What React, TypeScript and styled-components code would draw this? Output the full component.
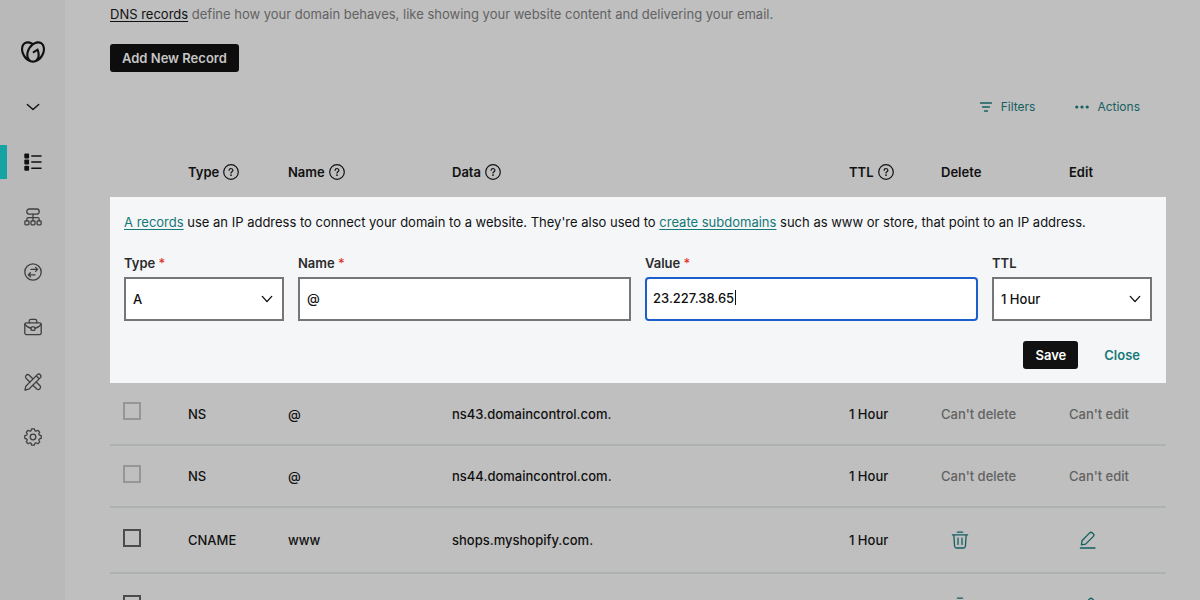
import React from "react";
import styled, { createGlobalStyle, css } from "styled-components";
import { SiGodaddy } from "react-icons/si";

const color = {
  page: "#bfbfbf",
  sidebar: "#b9b9b9",
  ink: "#111111",
  icon: "#3f3f3f",
  muted: "#626262",
  rule: "#aeb1b1",
  tealDim: "#145f60",
  teal: "#167877",
  accent: "#16a3a4",
  panel: "#f4f6f8",
  field: "#767676",
  focus: "#1b5fcd",
  required: "#e0352b",
};

const GlobalStyle = createGlobalStyle`
  *, *::before, *::after { box-sizing: border-box; }
  body {
    margin: 0;
    background: ${color.page};
    color: ${color.ink};
    font: 500 13px/20px Inter, "Liberation Sans", sans-serif;
  }
  button, input, select { font: inherit; color: inherit; }
`;

const Page = styled.div`
  display: flex;
  height: 100vh;
  overflow: hidden;
`;

const Sidebar = styled.nav`
  flex: none;
  width: 65px;
  padding-top: 24px;
  display: flex;
  flex-direction: column;
  background: ${color.sidebar};
`;

const NavButton = styled.button<{ $active?: boolean }>`
  height: 55px;
  flex: none;
  padding: 0;
  border: 0;
  background: none;
  display: grid;
  grid-template-columns: 7px 1fr 7px;
  align-items: center;
  justify-items: center;
  color: ${(p) => (p.$active ? color.ink : color.icon)};
`;

const Marker = styled.span<{ $active?: boolean }>`
  width: 7px;
  height: 34px;
  background: ${(p) => (p.$active ? color.accent : "transparent")};
`;

const Main = styled.main`
  flex: 1;
  min-width: 0;
  padding: 4px 34px 0 45px;
`;

const Intro = styled.p`
  margin: 0 0 20px;
  color: ${color.muted};
  font-weight: 400;
`;

const TextLink = styled.a<{ $teal?: boolean }>`
  color: ${(p) => (p.$teal ? color.teal : color.ink)};
  text-decoration: underline;
  text-underline-offset: 2px;
`;

const SolidButton = styled.button<{ $dim?: boolean }>`
  height: 28px;
  padding: 0 12px;
  border: 0;
  border-radius: 3px;
  background: ${(p) => (p.$dim ? "#0d0d0d" : "#111111")};
  color: ${(p) => (p.$dim ? "#c6c6c6" : "#ffffff")};
  font-weight: 600;
`;

const PlainButton = styled.button`
  height: 28px;
  padding: 0 12px;
  border: 0;
  background: none;
  color: ${color.teal};
  font-weight: 600;
`;

const Toolbar = styled.div`
  display: flex;
  justify-content: flex-end;
  gap: 40px;
  padding: 25px 26px 30px 0;
`;

const ToolButton = styled.button`
  display: flex;
  align-items: center;
  gap: 8px;
  height: 20px;
  padding: 0;
  border: 0;
  background: none;
  color: ${color.tealDim};
  font-size: 12px;
  font-weight: 400;
`;

const Table = styled.table`
  width: 100%;
  table-layout: fixed;
  border-collapse: collapse;
`;

const HeadCell = styled.th`
  height: 50px;
  padding: 0;
  text-align: left;
  font-weight: 600;
`;

const HeadLabel = styled.span`
  display: flex;
  align-items: center;
  gap: 4px;
`;

const Row = styled.tr`
  border-bottom: 2px solid ${color.rule};
`;

const Cell = styled.td<{ $tall?: boolean; $muted?: boolean }>`
  height: ${(p) => (p.$tall ? 66 : 62)}px;
  padding: 0;
  color: ${(p) => (p.$muted ? color.muted : color.ink)};
`;

const CheckCell = styled(Cell)`
  padding: 0 0 5px 13px;
`;

const Check = styled.input`
  appearance: none;
  display: block;
  width: 18px;
  height: 18px;
  margin: 0;
  border: 2px solid #4c4c4c;
  &:disabled {
    border-color: #969696;
  }
`;

const IconButton = styled.button`
  display: block;
  padding: 0 10px;
  border: 0;
  background: none;
  color: ${color.tealDim};
  svg {
    display: block;
  }
`;

const PanelCell = styled.td`
  padding: 0;
`;

const Panel = styled.form`
  padding: 15px 14px 14px;
  background: ${color.panel};
`;

const PanelText = styled.p`
  margin: 0 0 21px;
  font-weight: 400;
`;

const Fields = styled.div`
  display: grid;
  grid-template-columns: 160px 1fr 1fr 160px;
  gap: 14px;
`;

const Field = styled.div`
  display: flex;
  flex-direction: column;
  gap: 4px;
  min-width: 0;
`;

const Label = styled.label`
  font-weight: 600;
  color: #2b2b2b;
`;

const Star = styled.span`
  color: ${color.required};
  font-weight: 500;
`;

const FieldBox = styled.div`
  position: relative;
  height: 44px;
`;

const control = css`
  appearance: none;
  width: 100%;
  height: 44px;
  padding: 0 7px;
  border: 2px solid ${color.field};
  border-radius: 0;
  background: #ffffff;
  outline: none;
`;

const Select = styled.select`
  ${control}
`;

const Input = styled.input<{ $focused?: boolean }>`
  ${control}
  padding-bottom: 3px;
  ${(p) =>
    p.$focused &&
    css`
      border-color: ${color.focus};
      border-radius: 4px;
      padding-left: 6px;
    `}
`;

const SelectArrow = styled.span`
  position: absolute;
  top: 0;
  right: 11px;
  height: 44px;
  display: flex;
  align-items: center;
  pointer-events: none;
`;

const Caret = styled.span`
  position: absolute;
  top: 13px;
  left: 90px;
  width: 1px;
  height: 15px;
  background: ${color.ink};
`;

const Buttons = styled.div`
  display: flex;
  justify-content: flex-end;
  gap: 14px;
  padding-top: 20px;
`;

const Stroke = ({ w = 18, h = 18, sw = 1.3, children }: { w?: number; h?: number; sw?: number; children: React.ReactNode }) => (
  <svg width={w} height={h} viewBox={`0 0 ${w} ${h}`} fill="none" stroke="currentColor" strokeWidth={sw} strokeLinecap="round" strokeLinejoin="round" aria-hidden="true">
    {children}
  </svg>
);

const Chevron = ({ w = 12 }: { w?: number }) => (
  <Stroke w={w} h={8} sw={1.4}>
    <path d={`M1.3 1.4 L${w / 2} 6.6 L${w - 1.3} 1.4`} />
  </Stroke>
);

const ListIcon = () => (
  <Stroke sw={1.5}>
    <g fill="currentColor" stroke="none">
      <rect x="0.3" y="0.5" width="4.8" height="5" rx="1" />
      <rect x="0.3" y="6.6" width="4.8" height="5" rx="1" />
      <rect x="0.3" y="12.7" width="4.8" height="5" rx="1" />
    </g>
    <path d="M7.8 3H17M7.8 9.1H17M7.8 15.2H17" />
  </Stroke>
);

const SitemapIcon = () => (
  <Stroke>
    <rect x="2.8" y="1" width="12.4" height="5.2" rx="2.4" />
    <path d="M9 6.2V12.8M2.8 12.8V11.2Q2.8 9.6 4.4 9.6H13.6Q15.2 9.6 15.2 11.2V12.8" />
    <rect x="0.9" y="12.8" width="4" height="4" rx="0.8" />
    <rect x="7" y="12.8" width="4" height="4" rx="0.8" />
    <rect x="13.1" y="12.8" width="4" height="4" rx="0.8" />
  </Stroke>
);

const TransferIcon = () => (
  <Stroke>
    <circle cx="9" cy="9" r="8.2" />
    <path d="M7 6.4H13.6M11.6 4.4L13.6 6.4L11.6 8.4M11 11.8H4.4M6.4 9.8L4.4 11.8L6.4 13.8" />
  </Stroke>
);

const BriefcaseIcon = () => (
  <Stroke>
    <rect x="0.8" y="4.8" width="16.4" height="11.8" rx="1.6" />
    <path d="M5.2 4.8V3.2Q5.2 1.4 7 1.4H11Q12.8 1.4 12.8 3.2V4.8M1 6.4Q3.4 9.8 7 10.2M17 6.4Q14.6 9.8 11 10.2" />
    <rect x="7" y="8.8" width="4" height="3.6" rx="1.2" />
  </Stroke>
);

const ToolsIcon = () => (
  <Stroke>
    <path d="M1 17L1.8 13.2L13.4 1.6Q14.9 0.4 16.3 1.7Q17.6 3.1 16.4 4.6L4.8 16.2ZM12.2 2.8L15.2 5.8" />
    <path d="M5.8 9L2 5.2Q0.9 3.9 2.1 2.4Q3.6 0.9 5 2L8.8 5.8M12.2 9L16.2 13Q17.1 14.2 15.9 15.8Q14.4 17.1 13 16.2L9 12.2" />
  </Stroke>
);

const polar = (radius: number, degrees: number) => {
  const a = (degrees * Math.PI) / 180;
  return `${(9 + radius * Math.sin(a)).toFixed(2)} ${(9 - radius * Math.cos(a)).toFixed(2)}`;
};

const gearPath =
  Array.from({ length: 8 }, (_, i) => {
    const a = i * 45;
    return `${i ? "L" : "M"}${polar(8.3, a - 9)}L${polar(8.3, a + 9)}L${polar(6.9, a + 15)}Q${polar(5.9, a + 22.5)} ${polar(6.9, a + 30)}`;
  }).join("") + "Z";

const GearIcon = () => (
  <Stroke>
    <path d={gearPath} />
    <circle cx="9" cy="9" r="2.8" />
  </Stroke>
);

const HelpIcon = () => (
  <Stroke w={16} h={16} sw={1.2}>
    <circle cx="8" cy="8" r="7.3" />
    <path d="M6.1 6.3Q6.2 4.5 8 4.5Q9.9 4.6 9.9 6.2Q9.9 7.2 8.9 7.7Q8 8.2 8 9.1" />
    <circle cx="8" cy="11.2" r="0.3" />
  </Stroke>
);

const FilterIcon = () => (
  <Stroke w={14} h={12} sw={1.3}>
    <path d="M1.5 2H12.5M3.5 6H10.5M5.5 10H8.5" />
  </Stroke>
);

const DotsIcon = () => (
  <svg width="14" height="4" viewBox="0 0 14 4" fill="currentColor" aria-hidden="true">
    <circle cx="1.8" cy="2" r="1.6" />
    <circle cx="7" cy="2" r="1.6" />
    <circle cx="12.2" cy="2" r="1.6" />
  </svg>
);

const TrashIcon = () => (
  <Stroke>
    <path d="M1.4 3.8H16.6M6.4 1.2H11.6M2.8 3.8L3.6 15.2Q3.8 17 5.4 17H12.6Q14.2 17 14.4 15.2L15.2 3.8M7 7.2V13.4M11 7.2V13.4" />
  </Stroke>
);

const EditIcon = () => (
  <Stroke>
    <path d="M2.4 13.8L3 9.8L10.6 1.9Q11.9 0.7 13.2 1.8L14.4 2.9Q15.5 4.2 14.4 5.4L6.6 13.1ZM1.4 17H16" />
  </Stroke>
);

const navItems = [
  { label: "Domain overview", Icon: ListIcon, active: true },
  { label: "Site structure", Icon: SitemapIcon },
  { label: "Transfers", Icon: TransferIcon },
  { label: "Business", Icon: BriefcaseIcon },
  { label: "Design tools", Icon: ToolsIcon },
  { label: "Settings", Icon: GearIcon },
];

const columns = [
  { label: "Type", width: 100, help: true },
  { label: "Name", width: 164, help: true },
  { label: "Data", width: undefined, help: true },
  { label: "TTL", width: 92, help: true },
  { label: "Delete", width: 128, help: false },
  { label: "Edit", width: 97, help: false },
];

const records = [
  { type: "NS", name: "@", data: "ns43.domaincontrol.com.", ttl: "1 Hour", locked: true },
  { type: "NS", name: "@", data: "ns44.domaincontrol.com.", ttl: "1 Hour", locked: true },
  { type: "CNAME", name: "www", data: "shops.myshopify.com.", ttl: "1 Hour", locked: false },
  { type: "", name: "", data: "", ttl: "", locked: false },
];

const RecordForm = () => (
  <Panel onSubmit={(e) => e.preventDefault()}>
    <PanelText>
      <TextLink $teal href="#a-records">A records</TextLink> use an IP address to connect your domain to a website. They're also used to{" "}
      <TextLink $teal href="#subdomains">create subdomains</TextLink> such as www or store, that point to an IP address.
    </PanelText>
    <Fields>
      <Field>
        <Label htmlFor="type">Type <Star>*</Star></Label>
        <FieldBox>
          <Select id="type" defaultValue="A">
            <option>A</option>
          </Select>
          <SelectArrow><Chevron /></SelectArrow>
        </FieldBox>
      </Field>
      <Field>
        <Label htmlFor="name">Name <Star>*</Star></Label>
        <FieldBox>
          <Input id="name" defaultValue="@" />
        </FieldBox>
      </Field>
      <Field>
        <Label htmlFor="value">Value <Star>*</Star></Label>
        <FieldBox>
          <Input id="value" defaultValue="23.227.38.65" $focused />
          <Caret />
        </FieldBox>
      </Field>
      <Field>
        <Label htmlFor="ttl">TTL</Label>
        <FieldBox>
          <Select id="ttl" defaultValue="1 Hour">
            <option>1 Hour</option>
          </Select>
          <SelectArrow><Chevron /></SelectArrow>
        </FieldBox>
      </Field>
    </Fields>
    <Buttons>
      <SolidButton type="submit">Save</SolidButton>
      <PlainButton type="button">Close</PlainButton>
    </Buttons>
  </Panel>
);

export default function App() {
  return (
    <>
      <GlobalStyle />
      <Page>
        <Sidebar>
          <NavButton $active aria-label="Home"><Marker /><SiGodaddy size={24} /></NavButton>
          <NavButton $active aria-label="Expand menu"><Marker /><Chevron w={14} /></NavButton>
          {navItems.map(({ label, Icon, active }) => (
            <NavButton key={label} aria-label={label} $active={active}>
              <Marker $active={active} />
              <Icon />
            </NavButton>
          ))}
        </Sidebar>
        <Main>
          <Intro>
            <TextLink href="#dns-records">DNS records</TextLink> define how your domain behaves, like showing your website content and delivering your email.
          </Intro>
          <SolidButton $dim type="button">Add New Record</SolidButton>
          <Toolbar>
            <ToolButton><FilterIcon />Filters</ToolButton>
            <ToolButton><DotsIcon />Actions</ToolButton>
          </Toolbar>
          <Table>
            <colgroup>
              <col width={78} />
              {columns.map((c) => <col key={c.label} width={c.width} />)}
            </colgroup>
            <thead>
              <tr>
                <HeadCell />
                {columns.map((c) => (
                  <HeadCell key={c.label} scope="col">
                    <HeadLabel>{c.label}{c.help && <HelpIcon />}</HeadLabel>
                  </HeadCell>
                ))}
              </tr>
            </thead>
            <tbody>
              <tr><PanelCell colSpan={7}><RecordForm /></PanelCell></tr>
              {records.map((r, i) => (
                <Row key={i}>
                  <CheckCell $tall={!r.locked}>
                    <Check type="checkbox" disabled={r.locked} aria-label="Select record" />
                  </CheckCell>
                  <Cell>{r.type}</Cell>
                  <Cell>{r.name}</Cell>
                  <Cell>{r.data}</Cell>
                  <Cell>{r.ttl}</Cell>
                  <Cell $muted>
                    {r.locked ? "Can't delete" : <IconButton aria-label="Delete record"><TrashIcon /></IconButton>}
                  </Cell>
                  <Cell $muted>
                    {r.locked ? "Can't edit" : <IconButton aria-label="Edit record"><EditIcon /></IconButton>}
                  </Cell>
                </Row>
              ))}
            </tbody>
          </Table>
        </Main>
      </Page>
    </>
  );
}
